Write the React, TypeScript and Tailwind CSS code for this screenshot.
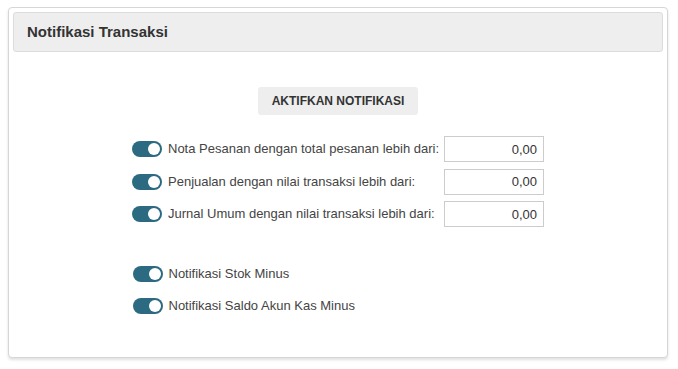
import React, { useState } from 'react';

type Rule = { key: string; label: string; value: string };

const THRESHOLDS: Rule[] = [
  { key: 'nota', label: 'Nota Pesanan dengan total pesanan lebih dari:', value: '0,00' },
  { key: 'jual', label: 'Penjualan dengan nilai transaksi lebih dari:', value: '0,00' },
  { key: 'jurnal', label: 'Jurnal Umum dengan nilai transaksi lebih dari:', value: '0,00' },
];

const FLAGS = [
  { key: 'stok', label: 'Notifikasi Stok Minus' },
  { key: 'kas', label: 'Notifikasi Saldo Akun Kas Minus' },
];

function Toggle({ on, onClick }: { on: boolean; onClick: () => void }) {
  return (
    <button
      type="button"
      onClick={onClick}
      className={`relative h-[16px] w-[30px] shrink-0 rounded-full ${on ? 'bg-[#2c6a82]' : 'bg-gray-300'}`}
    >
      <span
        className={`absolute top-[2px] h-[12px] w-[12px] rounded-full bg-white ${on ? 'left-[16px]' : 'left-[2px]'}`}
      />
    </button>
  );
}

export default function App() {
  const [enabled, setEnabled] = useState<Record<string, boolean>>({
    nota: true, jual: true, jurnal: true, stok: true, kas: true,
  });
  const [values, setValues] = useState<Record<string, string>>(
    Object.fromEntries(THRESHOLDS.map(t => [t.key, t.value]))
  );

  const flip = (k: string) => setEnabled(prev => ({ ...prev, [k]: !prev[k] }));

  return (
    <main className="min-h-screen bg-white pl-[8px] pr-[10px] pt-[7px] font-['Liberation_Sans',Arial,sans-serif] text-[#333]">
      <section className="h-[351px] rounded-[4px] border border-[#d6d6d6] bg-white p-[4px] shadow-[0_2px_3px_rgba(0,0,0,0.12)]">
        {/* header */}
        <div className="flex h-[40px] items-center rounded-[3px] border border-[#dcdcdc] bg-[#eeeeee] px-[13px]">
          <h1 className="text-[15px] font-bold">Notifikasi Transaksi</h1>
        </div>

        <div className="flex flex-col items-center pt-[35px]">
          <button
            type="button"
            className="h-[28px] w-[160px] rounded-[3px] bg-[#eeeeee] text-[12px] font-bold uppercase text-[#333]"
          >
            Aktifkan Notifikasi
          </button>

          {/* thresholds */}
          <div className="mt-[21px] flex flex-col gap-[6.5px]">
            {THRESHOLDS.map(t => (
              <div key={t.key} className="flex items-center">
                <Toggle on={enabled[t.key]} onClick={() => flip(t.key)} />
                <span className="ml-[6px] w-[276px] text-[13px] text-[#444]">{t.label}</span>
                <input
                  type="text"
                  value={values[t.key]}
                  onChange={e => setValues(prev => ({ ...prev, [t.key]: e.target.value }))}
                  className="h-[26px] w-[100px] border border-[#cccccc] bg-white px-[6px] text-right text-[13px] text-[#333] outline-none"
                />
              </div>
            ))}
          </div>

          {/* flags */}
          <div className="mt-[37px] flex w-[411px] flex-col gap-[12.5px]">
            {FLAGS.map(f => (
              <div key={f.key} className="flex items-center">
                <Toggle on={enabled[f.key]} onClick={() => flip(f.key)} />
                <span className="ml-[6px] text-[13px] text-[#444]">{f.label}</span>
              </div>
            ))}
          </div>
        </div>
      </section>
    </main>
  );
}
